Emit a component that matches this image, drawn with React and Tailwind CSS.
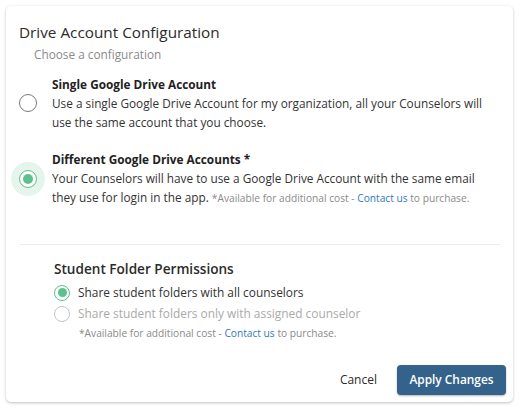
import React from "react";

function Radio({ checked, disabled, size = "lg" }) {
  const box = size === "lg" ? "w-[18px] h-[18px]" : "w-[16px] h-[16px]";
  const dot = size === "lg" ? "w-[10px] h-[10px]" : "w-[9px] h-[9px]";
  return (
    <span
      className={`${box} rounded-full flex items-center justify-center bg-white border-[1.5px] ${
        checked ? "border-[#5ec08c]" : disabled ? "border-[#c4c4c4]" : "border-[#7a7a7a]"
      }`}
    >
      {checked && <span className={`${dot} rounded-full bg-[#5ec08c]`}></span>}
    </span>
  );
}

function Note({ className = "" }) {
  return (
    <span className={`text-[10.2px] text-[#8a8a8a] ${className}`}>
      *Available for additional cost - <span className="text-[#2f7bc0]">Contact us</span> to purchase.
    </span>
  );
}

export default function App() {
  return (
    <div className="w-[520px] h-[410px] bg-white p-[6px] font-['Open_Sans',sans-serif]">
      <div className="w-[507px] h-[396px] bg-white rounded-[5px] shadow-[0_1px_3px_rgba(0,0,0,0.25)] flex flex-col">
        <div className="px-[13px] pt-[14px]">
          {/* Header */}
          <h2 className="text-[15.3px] leading-[24px] text-[#2b2b2b]">Drive Account Configuration</h2>
          <p className="ml-[15px] text-[11.8px] leading-[20px] text-[#8a8a8a]">Choose a configuration</p>

          {/* Option 1 */}
          <div className="mt-[10px] flex items-center">
            <div className="-ml-[8px] w-[34px] h-[34px] flex items-center justify-center flex-shrink-0">
              <Radio />
            </div>
            <div className="ml-[7px] text-[11.8px] text-[#333]">
              <div className="font-bold leading-[20px] text-[#222]">Single Google Drive Account</div>
              <div className="leading-[19px]">
                Use a single Google Drive Account for my organization, all your Counselors will use the same account that you choose.
              </div>
            </div>
          </div>

          {/* Option 2 */}
          <div className="mt-[17px] flex items-center">
            <div className="-ml-[8px] w-[34px] h-[34px] rounded-full bg-[#e5f5ec] flex items-center justify-center flex-shrink-0">
              <Radio checked />
            </div>
            <div className="ml-[7px] text-[11.8px] text-[#333]">
              <div className="font-bold leading-[20px] text-[#222]">Different Google Drive Accounts *</div>
              <div className="leading-[19px]">
                Your Counselors will have to use a Google Drive Account with the same email they use for login in the app. <Note />
              </div>
            </div>
          </div>

          <div className="mt-[36px] ml-[1px] border-t border-[#ececec]"></div>

          {/* Student folder permissions */}
          <div className="ml-[35px] mt-[13px]">
            <h3 className="text-[13.6px] leading-[22px] font-semibold text-[#2b2b2b]">Student Folder Permissions</h3>
            <div className="mt-[2px] flex items-center gap-[8px] h-[21px]">
              <Radio checked size="sm" />
              <span className="text-[11.9px] text-[#333]">Share student folders with all counselors</span>
            </div>
            <div className="flex items-center gap-[8px] h-[21px]">
              <Radio disabled size="sm" />
              <span className="text-[11.9px] text-[#aaa]">Share student folders only with assigned counselor</span>
            </div>
            <div className="ml-[25px] -mt-[1px] leading-[16px]">
              <Note />
            </div>
          </div>
        </div>

        {/* Footer */}
        <div className="mt-auto flex items-center justify-end gap-[20px] pr-[7px] pb-[7px]">
          <button className="text-[12px] text-[#2b2b2b]">Cancel</button>
          <button className="w-[109px] h-[30px] rounded-[4px] bg-[#34628b] text-white text-[11.9px] font-semibold shadow-[0_1px_2px_rgba(0,0,0,0.3)]">
            Apply Changes
          </button>
        </div>
      </div>
    </div>
  );
}
